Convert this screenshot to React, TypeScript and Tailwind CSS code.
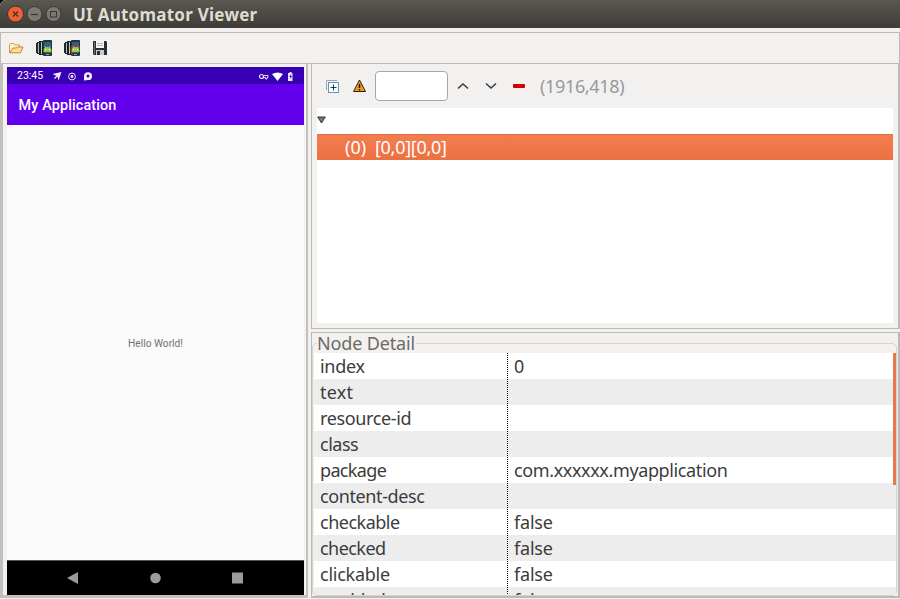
import React from 'react';

const rows = [
  { name: 'index', value: '0', nameCls: 'tracking-[-0.3px]', valueCls: '' },
  { name: 'text', value: '', nameCls: 'tracking-[0.2px]', valueCls: '' },
  { name: 'resource-id', value: '', nameCls: 'tracking-[-0.36px]', valueCls: '' },
  { name: 'class', value: '', nameCls: 'tracking-[-0.5px]', valueCls: '' },
  { name: 'package', value: 'com.xxxxxx.myapplication', nameCls: 'tracking-[-0.65px]', valueCls: 'tracking-[-0.38px]' },
  { name: 'content-desc', value: '', nameCls: 'tracking-[-0.4px]', valueCls: '' },
  { name: 'checkable', value: 'false', nameCls: 'tracking-[-0.5px]', valueCls: 'tracking-[-0.2px]' },
  { name: 'checked', value: 'false', nameCls: 'tracking-[-0.55px]', valueCls: 'tracking-[-0.2px]' },
  { name: 'clickable', value: 'false', nameCls: 'tracking-[-0.25px]', valueCls: 'tracking-[-0.2px]' },
  { name: 'enabled', value: 'false', nameCls: 'tracking-[-0.4px]', valueCls: 'tracking-[-0.2px]' },
];

function TitleBar() {
  return (
    <header className="flex h-7 shrink-0 items-center rounded-tl-md bg-linear-to-b from-[#5a5851] to-[#3d3c37] pl-[7px]">
      <svg width="56" height="18" viewBox="0 0 56 18">
        <circle cx="8.5" cy="9" r="8" fill="#ed5f36" stroke="#35342f" />
        <path d="M6 6.5l5 5m0-5l-5 5" stroke="#4a2d20" strokeWidth="1.2" />
        <circle cx="27.5" cy="9" r="7.5" fill="#7b7970" stroke="#383732" />
        <path d="M24 9.5h7" stroke="#383732" strokeWidth="1.2" />
        <circle cx="46.5" cy="9" r="7.5" fill="#7b7970" stroke="#383732" />
        <rect x="43.5" y="6.5" width="6" height="5.5" fill="none" stroke="#383732" />
      </svg>
      <h1 className="mt-[2px] ml-[10px] text-[17px] leading-7 font-bold tracking-[0.25px] whitespace-nowrap text-[#dfdbd2]">UI Automator Viewer</h1>
    </header>
  );
}

function DevicesIcon({ red = false }: { red?: boolean }) {
  return (
    <svg width="16" height="16" viewBox="0 0 16 16">
      <path d="M1 2h3v12H1zM0 3h1v10H0z" fill="#20282b" />
      <path d="M2 3h1v10H2z" fill="#a9c4b9" />
      <path d="M3 1h4v14H3z" fill="#182225" />
      <path d="M5 2h1v12H5z" fill="#b8cdbb" />
      <rect x="7" y="0" width="9" height="16" rx="1" fill="#26363c" />
      <rect x="8" y="2" width="7" height="11" fill="#2b5f8c" />
      <path d="M7.5 12V11a4 4 0 0 1 8 0v1z" fill="#9ccc43" />
      <path d="M8.5 6l1.5 2M14.5 6l-1.5 2" stroke="#9ccc43" />
      <path d="M9 9h1v1H9zM13 9h1v1h-1z" fill="#f4ffe4" />
      <path d="M10 14h3v1h-3z" fill="#9aa6aa" />
      {red && <path d="M9 5h5M8.5 5.5L7 8v5l2 1.5M14.5 5.5L15.5 8" fill="none" stroke="#d3272c" />}
    </svg>
  );
}

function Toolbar() {
  return (
    <div className="mt-1 flex h-8 shrink-0 items-center border border-[#bcbab7] pl-[7px]">
      <svg width="16" height="16" viewBox="0 0 16 16">
        <path d="M1.5 12.5V4.5l1-1h3L7 5h4.5v2" fill="#fff3cb" stroke="#c79a4d" />
        <path d="M1.8 12.8L5 8h3.5l1-1H15l-2.5 5.8z" fill="#ffdf8d" stroke="#c58431" strokeLinejoin="round" />
      </svg>
      <span className="ml-3 flex"><DevicesIcon /></span>
      <span className="ml-3 flex"><DevicesIcon red /></span>
      <svg className="ml-3" width="16" height="16" viewBox="0 0 16 16">
        <path d="M1 1h13l1 1v13H2l-1-1z" fill="#292e30" />
        <path d="M4 1h8v7H4z" fill="#f6f7f6" />
        <path d="M5 3.5h6M5 5.5h6" stroke="#aeb4b5" />
        <path d="M4 10h8v5H4z" fill="#c7cdce" />
        <path d="M5 11h3v4H5z" fill="#293336" />
        <path d="M2 2h1v12H2z" fill="#6c7476" />
      </svg>
    </div>
  );
}

function Phone() {
  return (
    <section className="h-[535px] w-[308px] shrink-0 border-t border-r-2 border-b-[3px] border-l-[3px] border-[#c3c0bb] bg-[#f4f2f1] pt-[3px] pl-1">
      <div className="flex h-[528px] w-[297px] flex-col bg-[#fafafa] font-['Roboto',sans-serif]">
        <div className="flex h-[17px] shrink-0 items-center bg-[#3800b3] text-white">
          <span className="ml-[10px] w-[27px] text-[10.5px] leading-[18px] whitespace-nowrap">23:45</span>
          <svg className="mt-px ml-[8px]" width="42" height="11" viewBox="0 0 42 11">
            <path d="M.5 3L9.5 1L6.5 9.5L5.3 5.2Z" fill="#f5efff" />
            <path d="M5 5L2.5 7.5" stroke="#f5efff" strokeWidth="1.2" />
            <circle cx="20" cy="5.5" r="3.4" fill="none" stroke="#eee6ff" />
            <circle cx="20" cy="5.5" r="1.4" fill="#eee6ff" />
            <path d="M32 9.5V5a4 3.9 0 1 1 4 4z" fill="#f5efff" />
            <circle cx="36" cy="5" r="1.5" fill="#3800b3" />
          </svg>
          <svg className="mt-px mr-[9px] ml-auto" width="37" height="11" viewBox="0 0 37 11">
            <circle cx="3.5" cy="5.5" r="2" fill="none" stroke="#f1eaff" strokeWidth="1.2" />
            <path d="M5.5 4.5H10v2H9V8H7.5V6.5h-2z" fill="none" stroke="#f1eaff" strokeWidth=".9" />
            <path d="M14 3q5.5-3 11 0L19.5 10z" fill="white" />
            <path d="M31.500 1h2v1h1v8h-4.500V2h1.500z" fill="#e9dfff" />
            <path d="M33 3l-1.700 3h1.200v2l1.500-3h-1.200z" fill="#3800b3" />
          </svg>
        </div>
        <div className="h-[41px] shrink-0 bg-[#6200ee] pl-[11.5px] text-[14.4px] leading-[43px] font-medium tracking-[0.14px] whitespace-nowrap text-white">My Application</div>
        <div className="flex flex-1 items-center justify-center pt-[3px] text-[10.2px] text-[#737373]">Hello World!</div>
        <div className="flex h-[35px] shrink-0 border-t border-[#555] bg-black">
          <svg width="297" height="34" viewBox="0 0 297 34" fill="#9b9b9b">
            <path d="M60 17L71 11v12z" />
            <circle cx="148.5" cy="17" r="5.3" />
            <rect x="225" y="11.5" width="11" height="11" rx=".5" />
          </svg>
        </div>
      </div>
    </section>
  );
}

function Tree() {
  return (
    <section className="flex h-[266px] flex-col border border-r-2 border-[#bcbab7] pl-[5px]">
      <div className="flex h-11 shrink-0 items-center">
        <svg className="ml-[9px]" width="14" height="13" viewBox="0 0 14 13">
          <path d="M.5 10V.5H11" fill="none" stroke="#91a8b8" />
          <rect x="2.500" y="2.500" width="10" height="10" fill="#f4fdff" stroke="#6892ae" />
          <path d="M7.500 4.500v6M4.500 7.500h6" stroke="#123d60" />
        </svg>
        <svg className="ml-[13px]" width="13" height="14" viewBox="0 0 13 14">
          <path d="M6.500 1L12.500 12.500H.5z" fill="#f59b18" stroke="#28231a" strokeLinejoin="round" />
          <path d="M6.500 5v4M6.500 10v1.500" stroke="#1c1711" strokeWidth="1.500" />
        </svg>
        <input aria-label="Search" className="ml-[9px] h-[30px] w-[73px] rounded-[4px] border border-[#aaa7a2] bg-white px-2 outline-none" />
        <svg className="ml-[9px]" width="12" height="8" viewBox="0 0 12 8"><path d="M1 6.500L6 2l5 4.500" fill="none" stroke="#393939" strokeWidth="1.500" /></svg>
        <svg className="ml-4" width="12" height="8" viewBox="0 0 12 8"><path d="M1 1.500L6 6l5-4.500" fill="none" stroke="#393939" strokeWidth="1.500" /></svg>
        <span className="ml-4 h-1 w-3 rounded-[1px] bg-[#d40000]" />
        <span className="ml-[15px] text-[18px] tracking-[-0.35px] whitespace-nowrap text-[#999]">(1916,418)</span>
      </div>
      <div className="h-[215px] w-[576px] bg-white">
        <div className="flex h-[26px] items-center pb-[2px]">
          <svg width="9" height="8" viewBox="0 0 9 8"><path d="M.7 1h7.600L4.500 7z" fill="#777" stroke="#333" /></svg>
        </div>
        <div className="flex h-[26px] items-center border-t border-[#df6e41] bg-linear-to-b from-[#f47d50] to-[#ec7141] pb-[2px] pl-[28px] text-[18px] leading-[24px] whitespace-pre text-white">
          <span className="w-[30px]">(0)</span><span className="tracking-[-0.3px]">[0,0][0,0]</span>
        </div>
      </div>
    </section>
  );
}

function Details() {
  return (
    <section className="mt-[3px] h-[266px] border border-r-2 border-b-2 border-[#bcbab7]">
      <fieldset className="h-[263px] w-[585px] rounded-[5px] border border-[#d5d1cd] pl-px">
        <legend className="-mt-[1px] ml-[3px] h-[20px] pr-[1px] text-[18px] leading-[21px] tracking-[-0.15px] whitespace-nowrap text-[#6c6a66]">Node Detail</legend>
        <div className="flex h-[242px] overflow-hidden bg-white">
          <div className="w-[193px] shrink-0">
            {rows.map((row, index) => (
              <div key={row.name} className={`h-[26px] pl-[6px] text-[18px] leading-[26px] whitespace-nowrap text-[#3c3c3c] ${index % 2 ? 'bg-[#ededed]' : 'bg-white'} ${row.nameCls}`}>{row.name}</div>
            ))}
          </div>
          <div className="w-px shrink-0 bg-[repeating-linear-gradient(to_bottom,#000_0px,#000_1px,#fff_1px,#fff_2px)]" />
          <div className="min-w-0 flex-1">
            {rows.map((row, index) => (
              <div key={row.name} className={`h-[26px] pl-[6px] text-[18px] leading-[26px] whitespace-nowrap text-[#3c3c3c] ${index % 2 ? 'bg-[#ededed]' : 'bg-white'} ${row.valueCls}`}>{row.value}</div>
            ))}
          </div>
          <div className="-ml-[3px] h-[132px] w-[3px] shrink-0 bg-[#e8774d]" />
        </div>
      </fieldset>
    </section>
  );
}

export default function App() {
  return (
    <div className="h-[599px] w-[900px] overflow-hidden bg-black">
      <div className="flex h-full flex-col rounded-tl-md bg-[#f2f1f0] font-['Noto_Sans',sans-serif]">
        <TitleBar />
        <Toolbar />
        <main className="-mt-px flex h-[536px] min-h-0 flex-1">
          <Phone />
          <div className="ml-[3px] min-w-0 flex-1"><Tree /><Details /></div>
        </main>
      </div>
    </div>
  );
}
